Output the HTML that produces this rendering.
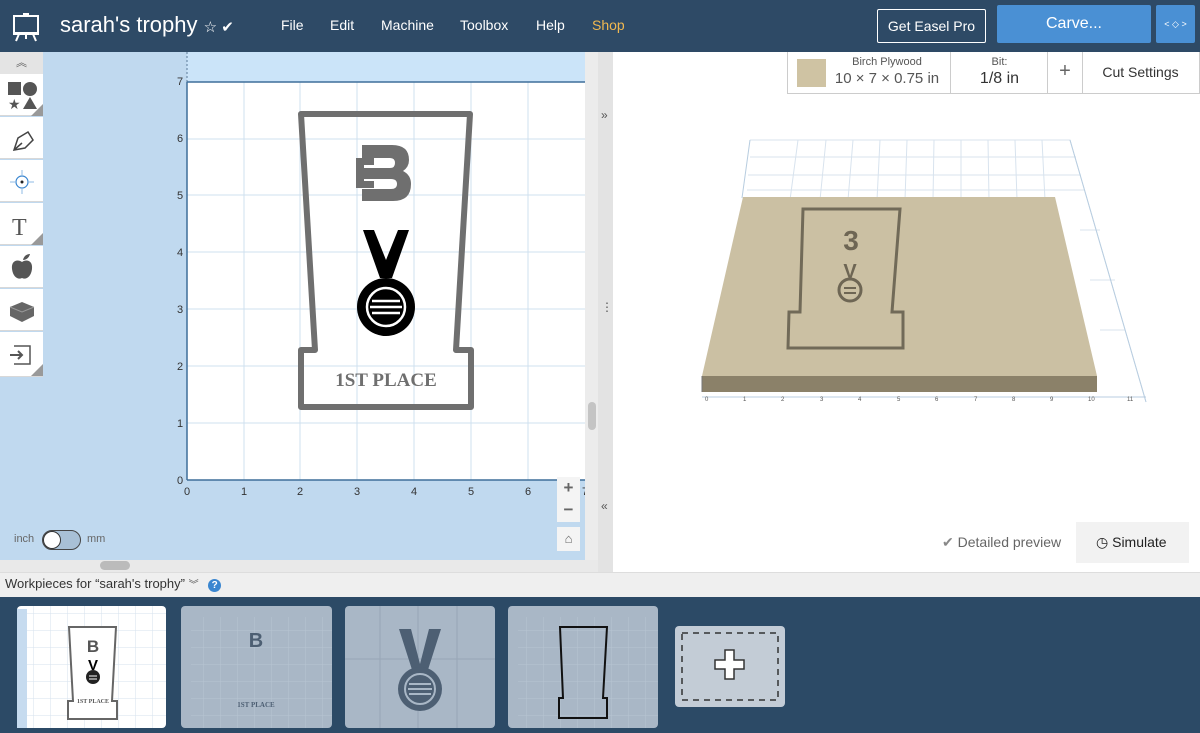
<!DOCTYPE html>
<html><head><meta charset="utf-8"><style>
*{box-sizing:border-box;margin:0;padding:0}
body{width:1200px;height:733px;overflow:hidden;font-family:"Liberation Sans",sans-serif;background:#fff;position:relative}
.a{position:absolute}
.hdr{left:0;top:0;width:1200px;height:52px;background:#2e4a66}
.nav{color:#fff;font-size:14px;top:17px}
.tool{left:0;width:43px;height:39px;background:#fff;border-bottom:1px solid #d8d8d8}
</style></head><body>
<div class="a hdr"></div>
<svg class="a" style="left:12px;top:12px" width="28" height="30" viewBox="0 0 28 30"><rect x="2" y="4" width="24" height="17" fill="none" stroke="#fff" stroke-width="2"/><rect x="11" y="1" width="6" height="3" fill="#fff"/><path d="M1 22h26M7 22l-3 7M21 22l3 7M14 22v5" stroke="#fff" stroke-width="2"/></svg>
<div class="a" style="left:60px;top:12px;color:#fff;font-size:22px">sarah's trophy <span style="font-size:15px">☆ ✔</span></div>
<div class="a nav" style="left:281px">File</div>
<div class="a nav" style="left:330px">Edit</div>
<div class="a nav" style="left:381px">Machine</div>
<div class="a nav" style="left:460px">Toolbox</div>
<div class="a nav" style="left:536px">Help</div>
<div class="a nav" style="left:592px;color:#f0b850">Shop</div>
<div class="a" style="left:877px;top:9px;width:109px;height:34px;border:1px solid #fff;border-radius:2px;color:#fff;font-size:14px;text-align:center;line-height:32px">Get Easel Pro</div>
<div class="a" style="left:997px;top:5px;width:154px;height:38px;background:#4a90d4;border-radius:2px;color:#fff;font-size:16px;text-align:center;line-height:38px">Carve...</div>
<div class="a" style="left:1156px;top:5px;width:39px;height:38px;background:#4a90d4;border-radius:2px;color:#fff;font-size:9px;text-align:center;line-height:38px">&lt; ◇ &gt;</div>

<!-- left canvas -->
<div class="a" style="left:0;top:52px;width:586px;height:508px;background:#c0d9ef"></div>
<div class="a" style="left:187px;top:52px;width:399px;height:30px;background:#cbe4f9"></div>
<svg class="a" style="left:0;top:52px" width="586" height="508">
<line x1="187" y1="0" x2="187" y2="30" stroke="#5b7a99" stroke-dasharray="2,2"/>
<rect x="187" y="30" width="398" height="398" fill="#fff"/>
<g stroke="#cfe0ef" stroke-width="1">
<line x1="244" y1="30" x2="244" y2="428"/><line x1="300" y1="30" x2="300" y2="428"/><line x1="357" y1="30" x2="357" y2="428"/><line x1="414" y1="30" x2="414" y2="428"/><line x1="471" y1="30" x2="471" y2="428"/><line x1="528" y1="30" x2="528" y2="428"/>
<line x1="187" y1="87" x2="585" y2="87"/><line x1="187" y1="143" x2="585" y2="143"/><line x1="187" y1="200" x2="585" y2="200"/><line x1="187" y1="257" x2="585" y2="257"/><line x1="187" y1="314" x2="585" y2="314"/><line x1="187" y1="371" x2="585" y2="371"/>
</g>
<line x1="187" y1="30" x2="585" y2="30" stroke="#3f6f9a" stroke-width="1.5"/>
<line x1="187" y1="30" x2="187" y2="428" stroke="#3f6f9a" stroke-width="1.5"/>
<line x1="187" y1="428" x2="585" y2="428" stroke="#3f6f9a" stroke-width="1.5"/>
<g font-size="11" fill="#333" font-family="Liberation Sans">
<text x="177" y="33">7</text><text x="177" y="90">6</text><text x="177" y="147">5</text><text x="177" y="204">4</text><text x="177" y="261">3</text><text x="177" y="318">2</text><text x="177" y="375">1</text><text x="177" y="432">0</text>
<text x="184" y="443">0</text><text x="241" y="443">1</text><text x="297" y="443">2</text><text x="354" y="443">3</text><text x="411" y="443">4</text><text x="468" y="443">5</text><text x="525" y="443">6</text><text x="582" y="443">7</text>
</g>
<!-- trophy -->
<path d="M301 62 L470 62 L456 298 L471 298 L471 355 L301 355 L301 298 L315 298 Z" fill="none" stroke="#6f6f6f" stroke-width="6" stroke-linejoin="round"/>
<text x="386" y="334" text-anchor="middle" font-family="Liberation Serif" font-weight="bold" font-size="19" fill="#6f6f6f">1ST PLACE</text>
<path d="M362 93 h30 q17 0 17 15 q0 7 -6 11 q8 4 8 13 q0 17 -18 17 h-31 v-12 h29 q6 0 6 -5 q0 -5 -6 -5 h-29 v-11 h28 q5 0 5 -5 q0 -5 -5 -5 h-28z" fill="#6f6f6f"/>
<path d="M356 106 h18 v7 h-10 v4 h10 v7 h-10 v5 h10 v7 h-18z" fill="#6f6f6f"/>
<path d="M363 178 h11 l12 30 l12 -30 h11 l-17 48 h-12z" fill="#000"/>
<circle cx="386" cy="255" r="29" fill="#000"/>
<circle cx="386" cy="255" r="19" fill="none" stroke="#fff" stroke-width="2.5"/>
<path d="M372 249h28M370 255h32M372 261h28" stroke="#fff" stroke-width="2.5"/>
</svg>
<!-- toolbar -->
<div class="a" style="left:0;top:52px;width:43px;height:22px;background:#e4e4e4;color:#555;font-size:11px;text-align:center;line-height:22px">︽</div>
<div class="a tool" style="top:74px;height:42px"><svg width="43" height="42"><rect x="8" y="8" width="13" height="13" fill="#555"/><circle cx="30" cy="15" r="7" fill="#555"/><text x="8" y="35" font-size="14" fill="#555">★</text><path d="M23 35l7-12l7 12z" fill="#555"/><path d="M43 30v12h-12z" fill="#999"/></svg></div>
<div class="a tool" style="top:117px;height:42px"><svg width="43" height="42"><path d="M14 33l4-12l10-6l5 8l-8 8z M14 33l8-7" fill="none" stroke="#444" stroke-width="1.5"/></svg></div>
<div class="a tool" style="top:160px;height:42px"><svg width="43" height="42"><circle cx="22" cy="22" r="6" fill="none" stroke="#3a86d0" stroke-width="1.2"/><circle cx="22" cy="22" r="1.5" fill="#222"/><path d="M10 22h6M28 22h6M22 10v6M22 28v6" stroke="#8fbbe5"/></svg></div>
<div class="a tool" style="top:203px;height:42px"><svg width="43" height="42"><text x="12" y="32" font-family="Liberation Serif" font-size="24" fill="#555">T</text><path d="M43 30v12h-12z" fill="#999"/></svg></div>
<div class="a tool" style="top:246px;height:42px"><svg width="43" height="42"><path d="M22 16c-4-3-11-2-10 7c1 8 6 11 10 9c4 2 9-1 10-9c1-9-6-10-10-7z" fill="#555"/><path d="M23 14c1-5 5-6 7-6c-1 4-4 6-7 6z" fill="#555"/></svg></div>
<div class="a tool" style="top:289px;height:42px"><svg width="43" height="42"><path d="M10 18l12-5l12 5v9l-12 6l-12-6z" fill="#666"/><path d="M10 18l12 5l12-5" stroke="#999" fill="none"/></svg></div>
<div class="a tool" style="top:332px;height:45px"><svg width="43" height="44"><path d="M14 14h16v18h-16" fill="none" stroke="#555" stroke-width="1.5"/><path d="M10 23h12M18 19l4 4l-4 4" stroke="#555" stroke-width="2" fill="none"/><path d="M43 32v12h-12z" fill="#999"/></svg></div>
<!-- zoom buttons -->
<div class="a" style="left:557px;top:477px;width:23px;height:45px;background:#f4f4f4;color:#666;font-size:17px;text-align:center;line-height:22px;font-weight:bold">+<br>−</div>
<div class="a" style="left:557px;top:527px;width:23px;height:24px;background:#f4f4f4;color:#666;font-size:13px;text-align:center;line-height:24px">⌂</div>
<div class="a" style="left:14px;top:533px;font-size:11px;color:#666">inch</div>
<div class="a" style="left:42px;top:530px;width:39px;height:20px;border:1px solid #444;border-radius:10px;background:#a8c0d6"></div>
<div class="a" style="left:43px;top:531px;width:18px;height:18px;border-radius:9px;background:#fff;border:1px solid #333"></div>
<div class="a" style="left:87px;top:533px;font-size:11px;color:#666">mm</div>
<div class="a" style="left:0;top:560px;width:598px;height:12px;background:#e9e9e9"></div>
<div class="a" style="left:100px;top:561px;width:30px;height:9px;border-radius:5px;background:#bbb"></div>
<div class="a" style="left:585px;top:52px;width:13px;height:508px;background:#ececec"></div>
<div class="a" style="left:588px;top:402px;width:8px;height:28px;border-radius:4px;background:#c4c4c4"></div>
<div class="a" style="left:598px;top:52px;width:15px;height:520px;background:#e3e3e3;color:#555;font-size:12px"></div>
<div class="a" style="left:601px;top:108px;font-size:12px;color:#555">»</div>
<div class="a" style="left:601px;top:300px;font-size:12px;color:#555">⋮</div>
<div class="a" style="left:601px;top:499px;font-size:12px;color:#555">«</div>

<!-- right panel -->
<div class="a" style="left:787px;top:52px;width:413px;height:42px;border:1px solid #ccc;border-top:none;background:#fff"></div>
<div class="a" style="left:797px;top:59px;width:29px;height:28px;background:#cfc3a3"></div>
<div class="a" style="left:826px;top:55px;width:122px;text-align:center;font-size:11px;color:#555;white-space:nowrap;line-height:14px">Birch Plywood<br><span style="font-size:15px;line-height:20px">10 × 7 × 0.75 in</span></div>
<div class="a" style="left:950px;top:52px;width:1px;height:42px;background:#ccc"></div>
<div class="a" style="left:951px;top:55px;width:97px;text-align:center;font-size:11px;color:#555;line-height:14px">Bit:<br><span style="font-size:16px;line-height:20px;color:#333">1/8 in</span></div>
<div class="a" style="left:1047px;top:52px;width:1px;height:42px;background:#ccc"></div>
<div class="a" style="left:1048px;top:60px;width:34px;text-align:center;font-size:20px;color:#666">+</div>
<div class="a" style="left:1082px;top:52px;width:1px;height:42px;background:#ccc"></div>
<div class="a" style="left:1083px;top:64px;width:115px;text-align:center;font-size:14px;color:#333">Cut Settings</div>

<svg class="a" style="left:690px;top:130px" width="460" height="280">
<g stroke="#d8e3ee" stroke-width="1" fill="none">
<path d="M60 10 L380 10 L456 272"/>
<path d="M108 10l-8 60M136 10l-6 60M163 10l-5 60M190 10l-3 60M217 10l-2 60M244 10l-1 60M271 10v60M298 10l1 60M325 10l2 60M352 10l3 60"/>
<path d="M60 27h326M58 45h333M57 60h338M390 100h20M400 150h25M410 200h25"/>
</g>
<path d="M60 10 L52 68" stroke="#b8cde0"/>
<path d="M380 10 L456 272" stroke="#b8cde0"/>
<path d="M12 267 L456 267" stroke="#b8cde0"/>
<path d="M53 67 L365 67 L407 246 L12 246 Z" fill="#cbc0a3"/>
<path d="M12 246 L407 246 L407 262 L12 262 Z" fill="#8b8169"/>
<path d="M12 246 L12 262" stroke="#777"/>
<path d="M113 79 L210 79 L202 182 L213 182 L213 218 L98 218 L99 182 L110 182 Z" fill="none" stroke="#716a58" stroke-width="3"/>
<text x="161" y="120" text-anchor="middle" font-size="28" font-weight="bold" fill="#6e6654">3</text>
<text x="160" y="148" text-anchor="middle" font-size="20" font-weight="bold" fill="#6e6654">V</text>
<circle cx="160" cy="160" r="11" fill="none" stroke="#6e6654" stroke-width="3"/>
<path d="M154 158h12M154 163h12" stroke="#6e6654" stroke-width="2"/>
<g font-size="6" fill="#555"><text x="15" y="271">0</text><text x="53" y="271">1</text><text x="91" y="271">2</text><text x="130" y="271">3</text><text x="168" y="271">4</text><text x="207" y="271">5</text><text x="245" y="271">6</text><text x="284" y="271">7</text><text x="322" y="271">8</text><text x="360" y="271">9</text><text x="398" y="271">10</text><text x="437" y="271">11</text></g>
</svg>
<div class="a" style="left:942px;top:534px;font-size:14px;color:#666"><span style="color:#888">✔</span> Detailed preview</div>
<div class="a" style="left:1076px;top:522px;width:113px;height:41px;background:#f2f2f2;font-size:14px;color:#222;line-height:41px;padding-left:20px">◷ Simulate</div>

<!-- workpieces bar -->
<div class="a" style="left:0;top:572px;width:1200px;height:25px;background:#efefef;border-top:1px solid #ddd"></div>
<div class="a" style="left:5px;top:576px;font-size:13px;color:#333">Workpieces for “sarah's trophy” <span style="font-size:10px;color:#555">︾</span> <span style="display:inline-block;width:13px;height:13px;border-radius:7px;background:#3a86d0;color:#fff;font-size:10px;text-align:center;line-height:13px;font-weight:bold;margin-left:6px">?</span></div>
<div class="a" style="left:0;top:597px;width:1200px;height:136px;background:#2c4a66"></div>
<svg class="a" style="left:0;top:597px" width="800" height="136">
<defs><pattern id="g" width="17" height="17" patternUnits="userSpaceOnUse"><path d="M17 0V17H0" fill="none" stroke="#d6e2ee"/></pattern></defs>
<rect x="17" y="9" width="149" height="122" rx="4" fill="#fff"/>
<rect x="17" y="9" width="149" height="122" rx="4" fill="url(#g)"/>
<rect x="17" y="12" width="10" height="119" fill="#c6dbef"/>
<path d="M69 30h47l-4 74h5v18h-49v-18h5z" fill="#fff" stroke="#666" stroke-width="2"/>
<text x="93" y="106" font-family="Liberation Serif" font-weight="bold" font-size="6" text-anchor="middle" fill="#555">1ST PLACE</text>
<text x="93" y="55" font-weight="bold" font-size="17" text-anchor="middle" fill="#555">B</text>
<text x="93" y="73" font-weight="bold" font-size="15" text-anchor="middle" fill="#000">V</text>
<circle cx="93" cy="80" r="7" fill="#222"/><path d="M89 79h8M89 82h8" stroke="#fff"/>
<rect x="181" y="9" width="151" height="122" rx="4" fill="#a9b7c6"/>
<rect x="191" y="20" width="141" height="111" fill="url(#g)" opacity=".3"/>
<text x="256" y="50" font-weight="bold" font-size="20" text-anchor="middle" fill="#4d5f73">B</text>
<text x="256" y="110" font-family="Liberation Serif" font-weight="bold" font-size="7" text-anchor="middle" fill="#4d5f73">1ST PLACE</text>
<rect x="345" y="9" width="150" height="122" rx="4" fill="#a9b7c6"/>
<path d="M345 62h150M380 9v122M418 9v122M457 9v122" stroke="#97a6b6"/>
<path d="M399 32h12l9 35l9-35h12l-15 47h-12z" fill="#4d5f73"/>
<circle cx="420" cy="92" r="22" fill="#4d5f73"/><circle cx="420" cy="92" r="15" fill="none" stroke="#a9b7c6" stroke-width="2"/><path d="M409 87h22M408 92h24M409 97h22" stroke="#a9b7c6" stroke-width="2"/>
<rect x="508" y="9" width="150" height="122" rx="4" fill="#a9b7c6"/>
<rect x="518" y="20" width="140" height="111" fill="url(#g)" opacity=".3"/>
<path d="M560 30h47l-4 71h4v20h-48v-20h4z" fill="none" stroke="#111" stroke-width="2"/>
<rect x="675" y="29" width="110" height="81" rx="4" fill="#c3ccd6"/>
<rect x="682" y="36" width="96" height="67" fill="none" stroke="#333" stroke-width="1.5" stroke-dasharray="6,5"/>
<path d="M725 53h9v10h10v9h-10v10h-9v-10h-10v-9h10z" fill="#fff" stroke="#333" stroke-width="1.5"/>
</svg>
</body></html>
